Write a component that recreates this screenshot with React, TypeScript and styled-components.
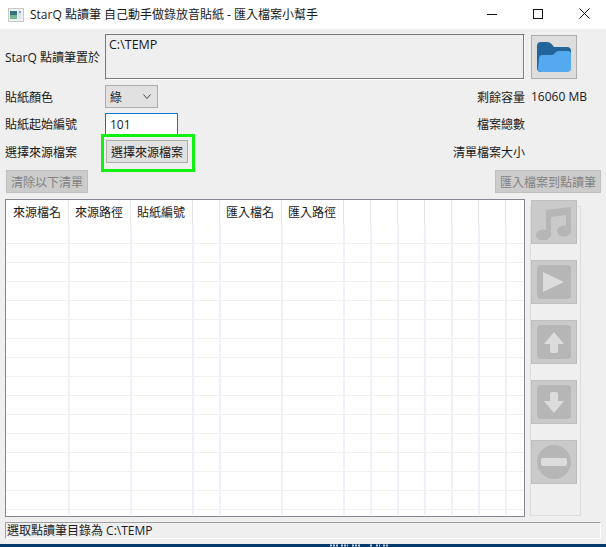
import React from 'react'
import styled, { createGlobalStyle } from 'styled-components'

const GlobalStyle = createGlobalStyle`
    html, body { margin: 0; padding: 0; background: #efefef; }
    body { font-family: "Open Sans", "Noto Sans CJK TC", sans-serif; font-size: 12px; color: #1a1a1a; }
`

const Window = styled.div`
    width: 606px;
    height: 547px;
    display: flex;
    flex-direction: column;
    overflow: hidden;
    background: #efefef;
`

const TitleBar = styled.div`
    height: 29px;
    flex: none;
    background: #fff;
    display: flex;
    align-items: center;
    padding-left: 8px;
`

const TitleText = styled.span`
    margin-left: 6px;
    flex: 1;
    white-space: nowrap;
    position: relative;
    top: -1px;
`

const Caption = styled.div`
    width: 46px;
    height: 29px;
    display: flex;
    align-items: center;
    justify-content: center;
    position: relative;
    top: -1px;
    left: 1px;
`

const Body = styled.div`
    flex: 1;
    display: flex;
    flex-direction: column;
    padding: 0 5px;
    min-height: 0;
`

const Row = styled.div<{ $top: number; $height: number }>`
    display: flex;
    align-items: center;
    margin-top: ${p => p.$top}px;
    height: ${p => p.$height}px;
    flex: none;
    position: relative;
`

const Label = styled.div`
    width: 100px;
    flex: none;
    white-space: nowrap;
`

const PathBox = styled.div`
    width: 420px;
    height: 46px;
    box-sizing: border-box;
    flex: none;
    border: 1px solid #7a7a7a;
    border-right-color: #fff;
    border-bottom-color: #fff;
    box-shadow: inset -1px -1px 0 #7a7a7a;
    padding: 2px 3px;
    line-height: 16px;
    font-size: 12.5px;
`

const FolderButton = styled.div`
    width: 46px;
    height: 44px;
    box-sizing: border-box;
    margin-left: 6px;
    flex: none;
    background: #dddddd;
    border: 1px solid #adadad;
    display: flex;
    align-items: center;
    justify-content: center;
`

const Select = styled.div`
    width: 53px;
    height: 23px;
    box-sizing: border-box;
    flex: none;
    background: #e1e1e1;
    border: 1px solid #adadad;
    padding: 0 4px 0 4px;
    display: flex;
    align-items: center;
    justify-content: space-between;
`

const NumberInput = styled.div`
    width: 73px;
    height: 23px;
    box-sizing: border-box;
    flex: none;
    align-self: flex-start;
    background: #fff;
    border: 1px solid #0078d7;
    padding: 0 4px 1px;
    display: flex;
    align-items: center;
`

const RightLabel = styled.div<{ $width: number }>`
    width: ${p => p.$width}px;
    flex: none;
    text-align: right;
    white-space: nowrap;
`

const Value = styled.div`
    margin-left: 6px;
    white-space: nowrap;
`

const Button = styled.div<{ $width: number; $left?: number; $disabled?: boolean }>`
    width: ${p => p.$width}px;
    height: 23px;
    box-sizing: border-box;
    flex: none;
    margin-left: ${p => p.$left ?? 0}px;
    display: flex;
    align-items: center;
    justify-content: center;
    white-space: nowrap;
    background: ${p => (p.$disabled ? '#cccccc' : '#e1e1e1')};
    border: 1px solid ${p => (p.$disabled ? '#bfbfbf' : '#adadad')};
    color: ${p => (p.$disabled ? '#838383' : '#1a1a1a')};
`

const Highlight = styled.div`
    position: absolute;
    left: 96px;
    top: -6px;
    width: 94px;
    height: 38px;
    box-sizing: border-box;
    border: 3px solid #12f212;
    pointer-events: none;
`

const Spread = styled(Row)`
    justify-content: space-between;
    padding: 0 0 0 1px;
`

const Main = styled.div`
    display: flex;
    margin-top: 6px;
    height: 318px;
    flex: none;
`

const Table = styled.div`
    width: 520px;
    height: 318px;
    box-sizing: border-box;
    flex: none;
    background: #fff;
    border: 1px solid #828790;
    overflow: hidden;
`

const HeadRow = styled.div`
    display: flex;
    height: 25px;
`

const HeadCell = styled.div<{ $width: number }>`
    width: ${p => p.$width}px;
    flex: none;
    box-sizing: border-box;
    white-space: nowrap;
    padding-left: 6px;
    line-height: 25px;
    border-right: 1px solid #e6e6e6;

    &:first-child {
        padding-left: 7px;
    }
`

const Rows = styled.div`
    height: 290px;
    overflow: hidden;
`

const BodyRow = styled.div`
    display: flex;
    height: 19px;
    box-sizing: border-box;
    border-bottom: 1px solid #f0f0f0;
`

const BodyCell = styled.div<{ $width: number }>`
    width: ${p => p.$width}px;
    flex: none;
    box-sizing: border-box;
    border-right: 2px solid #edf1f9;
`

const Side = styled.div`
    position: relative;
    width: 51px;
    height: 310px;
    box-sizing: border-box;
    margin: 7px 0 0 5px;
    border: 1px solid #dcdcdc;
    flex: none;
`

const SideList = styled.div`
    position: absolute;
    left: 0;
    top: -7px;
    display: flex;
    flex-direction: column;
    gap: 16px;
`

const SideButton = styled.div`
    width: 46px;
    height: 44px;
    box-sizing: border-box;
    background: #cacaca;
    border: 1px solid #bfbfbf;
    display: flex;
    align-items: center;
    justify-content: center;
`

const StatusBar = styled.div`
    margin-top: 5px;
    width: 596px;
    height: 17px;
    box-sizing: border-box;
    flex: none;
    border-top: 1px solid #a0a0a0;
    border-left: 1px solid #a0a0a0;
    border-right: 1px solid #fff;
    border-bottom: 1px solid #fff;
    padding-left: 1px;
    line-height: 16px;
    white-space: nowrap;
`

const Taskbar = styled.div`
    height: 3px;
    flex: none;
    background: #053a6d;
    padding-left: 328px;
    display: flex;
`

const columns = [62, 62, 62, 27, 62, 62, 27, 27, 27, 27, 27, 27, 27]
const heads = ['來源檔名', '來源路徑', '貼紙編號', '', '匯入檔名', '匯入路徑']
const rowCount = [...Array(16).keys()]

const AppIcon = () => (
    <svg width="16" height="14" viewBox="0 0 16 14">
        <rect width="16" height="14" fill="#c9c9c9" />
        <rect x="1" y="1" width="14" height="12" fill="#eef0f2" />
        <rect x="2" y="3" width="7" height="8" fill="#35757f" />
        <rect x="2" y="7" width="7" height="4" fill="#78b592" />
        <rect x="10" y="3" width="3" height="8" fill="#dbe2ea" />
        <rect x="11" y="3" width="2" height="2" fill="#7fa6c9" />
    </svg>
)

const FolderIcon = () => (
    <svg width="34" height="30" viewBox="0 0 34 30">
        <path d="M0 4q0-4 4-4h6q3 0 4.500 2l2.500 3h13q4 0 4 4v12L3 30q-3-1-3-4z" fill="#22659d" />
        <path d="M2 16q0-3 4-3h9q1.500 0 3-2l1-1q1-1 3-1h9q3 0 3 3v15q0 3-4 3H5q-4 0-4-3z" fill="#55aaef" />
    </svg>
)

const MusicIcon = () => (
    <svg width="36" height="36" viewBox="0 0 36 36">
        <path d="M10 6 35 3v26h-5V11L15 13v20h-5z" fill="#b6b6b6" />
        <ellipse cx="7" cy="31" rx="7" ry="5.500" fill="#b6b6b6" />
        <ellipse cx="28" cy="27" rx="7" ry="5.500" fill="#b6b6b6" />
    </svg>
)

const SquareIcon = ({ d }: { d: string }) => (
    <svg width="34" height="34" viewBox="0 0 34 34">
        <rect width="34" height="34" rx="4" fill="#b6b6b6" />
        <path d={d} fill="#dcdcdc" />
    </svg>
)

const MinusIcon = () => (
    <svg width="34" height="34" viewBox="0 0 34 34">
        <circle cx="17" cy="17" r="17" fill="#b6b6b6" />
        <rect x="4" y="13" width="26" height="8" rx="2" fill="#dcdcdc" />
    </svg>
)

const App = () => {
    return (
        <Window>
            <GlobalStyle />
            <TitleBar>
                <AppIcon />
                <TitleText>StarQ 點讀筆 自己動手做錄放音貼紙 - 匯入檔案小幫手</TitleText>
                <Caption>
                    <svg width="10" height="10" viewBox="0 0 10 10"><path d="M0 5.500h10" stroke="#111" /></svg>
                </Caption>
                <Caption>
                    <svg width="10" height="10" viewBox="0 0 10 10"><rect x="0.500" y="0.500" width="9" height="9" fill="none" stroke="#111" /></svg>
                </Caption>
                <Caption>
                    <svg width="11" height="11" viewBox="0 0 11 11"><path d="M0.500 0.500l10 10M10.500 0.500l-10 10" stroke="#111" /></svg>
                </Caption>
            </TitleBar>
            <Body>
                <Row $top={5} $height={46}>
                    <Label>StarQ 點讀筆置於</Label>
                    <PathBox>C:\TEMP</PathBox>
                    <FolderButton><FolderIcon /></FolderButton>
                </Row>
                <Row $top={5} $height={23}>
                    <Label>貼紙顏色</Label>
                    <Select>
                        綠
                        <svg width="12" height="6" viewBox="0 0 12 6"><path d="M2.500 0.500 6 4.500l3.500-4" fill="none" stroke="#444" /></svg>
                    </Select>
                    <RightLabel $width={367}>剩餘容量</RightLabel>
                    <Value>16060 MB</Value>
                </Row>
                <Row $top={5} $height={21}>
                    <Label>貼紙起始編號</Label>
                    <NumberInput>101</NumberInput>
                    <RightLabel $width={347}>檔案總數</RightLabel>
                </Row>
                <Row $top={6} $height={23}>
                    <Label>選擇來源檔案</Label>
                    <Button $width={82} $left={1}>選擇來源檔案</Button>
                    <RightLabel $width={337}>清單檔案大小</RightLabel>
                    <Highlight />
                </Row>
                <Spread $top={7} $height={23}>
                    <Button $width={82} $disabled>清除以下清單</Button>
                    <Button $width={106} $disabled>匯入檔案到點讀筆</Button>
                </Spread>
                <Main>
                    <Table>
                        <HeadRow>
                            {columns.map((w, i) => (
                                <HeadCell key={i} $width={i === 0 ? w + 1 : w}>{heads[i]}</HeadCell>
                            ))}
                        </HeadRow>
                        <Rows>
                            {rowCount.map(r => (
                                <BodyRow key={r}>
                                    {columns.map((w, i) => (
                                        <BodyCell key={i} $width={i === 0 ? w + 2 : w} />
                                    ))}
                                </BodyRow>
                            ))}
                        </Rows>
                    </Table>
                    <Side>
                        <SideList>
                            <SideButton><MusicIcon /></SideButton>
                            <SideButton><SquareIcon d="M6 7 27 17 6 27z" /></SideButton>
                            <SideButton><SquareIcon d="M17 7 27 19h-6v7q0 2-2 2h-4q-2 0-2-2v-7H7z" /></SideButton>
                            <SideButton><SquareIcon d="M17 28 27 16h-6V9q0-2-2-2h-4q-2 0-2 2v7H7z" /></SideButton>
                            <SideButton><MinusIcon /></SideButton>
                        </SideList>
                    </Side>
                </Main>
                <StatusBar>選取點讀筆目錄為 C:\TEMP</StatusBar>
            </Body>
            <Taskbar>
                <svg width="62" height="3" viewBox="0 0 62 3">
                    <path d="M2 1.500h8M13 1.500h7M24 1.500h8M42 1.500h3M48 1.500h4M55 1.500h5" stroke="#c4d2e0" strokeWidth="2" strokeDasharray="2 1" />
                </svg>
            </Taskbar>
        </Window>
    )
}

export default App
